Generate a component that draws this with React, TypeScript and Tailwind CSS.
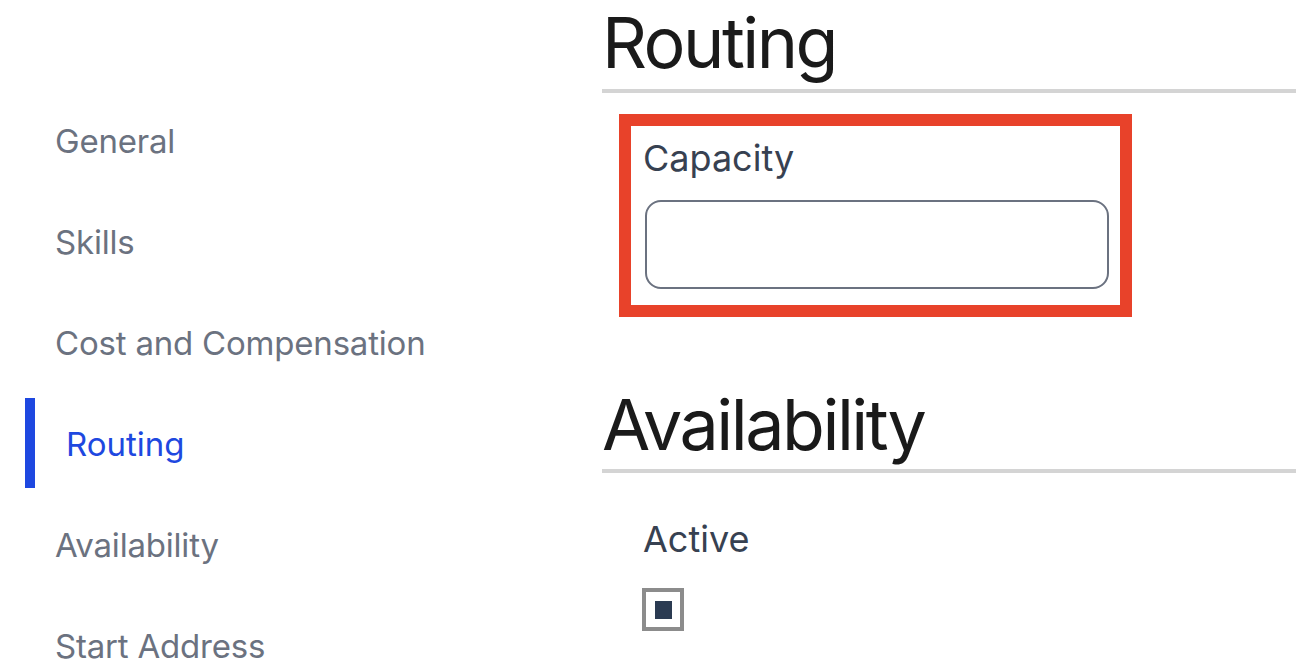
import React from "react";

const items = [
  "General",
  "Skills",
  "Cost and Compensation",
  "Routing",
  "Availability",
  "Start Address",
];

export default function App() {
  return (
    <div
      className="flex h-[668px] w-[1296px] overflow-hidden bg-white"
      style={{ fontFamily: "Inter, 'Noto Sans', sans-serif" }}
    >
      <nav className="flex w-[602px] shrink-0 flex-col gap-[11px] pl-[25px] pt-[95px]">
        {items.map((label) =>
          label === "Routing" ? (
            <div
              key={label}
              className="flex h-[90px] shrink-0 items-center border-l-[10px] border-[#1e48e0] pl-[31px] pt-[3px] text-[33px] text-[#1e48e0]"
            >
              {label}
            </div>
          ) : (
            <div
              key={label}
              className="flex h-[90px] shrink-0 items-center pl-[30px] pt-[3px] text-[33px] tracking-[-0.2px] text-[#6b7280]"
            >
              {label}
            </div>
          )
        )}
      </nav>

      <main className="flex flex-1 flex-col">
        <h1 className="shrink-0 pt-[8px] text-[70px] leading-[70px] tracking-[-2.5px] text-[#1a1a1a]">Routing</h1>
        <div className="mt-[11px] h-[4px] shrink-0 bg-[#d4d4d4]" />

        <div className="ml-[17px] mt-[21px] w-[513px] shrink-0 border-[12px] border-[#e8422a] pb-[16px] pl-[12px] pt-[10px]">
          <div className="text-[36px] leading-[44px] text-[#374151]">Capacity</div>
          <div className="ml-[2px] mt-[20px] h-[89px] w-[464px] rounded-[16px] border-2 border-[#6b7280]" />
        </div>

        <h1 className="mt-[73px] shrink-0 text-[70px] leading-[70px] tracking-[-2.5px] text-[#1a1a1a]">Availability</h1>
        <div className="mt-[9px] h-[4px] shrink-0 bg-[#d4d4d4]" />

        <div className="ml-[41px] mt-[44px] shrink-0 text-[36px] leading-[44px] text-[#374151]">Active</div>
        <div className="ml-[40px] mt-[27px] flex h-[43px] w-[42px] shrink-0 items-center justify-center border-[4px] border-[#8c8c8c] bg-white">
          <div className="h-[18px] w-[17px] bg-[#2b3b52]" />
        </div>
      </main>
    </div>
  );
}
